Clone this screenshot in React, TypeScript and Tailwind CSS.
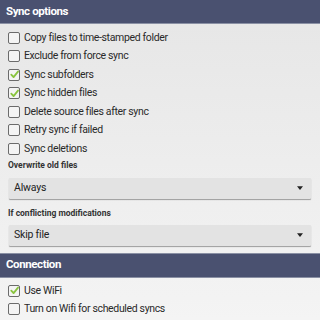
const Box = ({ checked }: { checked?: boolean }) => (
  <span className="relative flex h-[12px] w-[12px] shrink-0 items-center justify-center rounded-[2px] border border-[#6b6b6b] bg-[#f4f4f4]">
    {checked && (
      <svg viewBox="0 0 12 12" className="absolute h-[11px] w-[11px]">
        <path d="M2.5 6.2 L5 8.8 L9.8 2.8" fill="none" stroke="#8ac43f" strokeWidth="2" strokeLinecap="round" strokeLinejoin="round" />
      </svg>
    )}
  </span>
);

const Row = ({ label, checked }: { label: string; checked?: boolean }) => (
  <div className="flex h-[18.5px] items-center gap-[4px] pl-[8px]">
    <Box checked={checked} />
    <span className="text-[10.5px] tracking-[-0.35px] text-[#2a2a2a]">{label}</span>
  </div>
);

const Header = ({ title }: { title: string }) => (
  <div className="flex h-[24px] items-center border-b border-[#8a90a4] bg-[#4a5170] pl-[6px] text-[11.5px] font-bold tracking-[-0.4px] text-white">
    {title}
  </div>
);

const Select = ({ value }: { value: string }) => (
  <div className="mx-[9px] flex h-[21px] items-center justify-between rounded-[1px] bg-[#e3e3e3] pl-[5px] pr-[8px] shadow-[0_1px_1px_rgba(0,0,0,0.35)]">
    <span className="text-[10.5px] tracking-[-0.2px] text-[#222]">{value}</span>
    <svg viewBox="0 0 8 5" className="h-[4px] w-[6px]">
      <path d="M0 0 H8 L4 5 Z" fill="#222" />
    </svg>
  </div>
);

const Label = ({ text }: { text: string }) => (
  <div className="pl-[8px] text-[8.5px] font-bold text-[#333]">{text}</div>
);

export default function App() {
  return (
    <div className="h-[320px] w-[320px] overflow-hidden bg-gradient-to-b from-[#e6e6e6] to-[#f4f4f4] font-['Roboto',sans-serif]">
      <Header title="Sync options" />
      <div className="pt-[4.5px]">
        <Row label="Copy files to time-stamped folder" />
        <Row label="Exclude from force sync" />
        <Row label="Sync subfolders" checked />
        <Row label="Sync hidden files" checked />
        <Row label="Delete source files after sync" />
        <Row label="Retry sync if failed" />
        <Row label="Sync deletions" />
      </div>
      <div className="mt-[1px]"><Label text="Overwrite old files" /></div>
      <div className="mt-[6px]"><Select value="Always" /></div>
      <div className="mt-[8px]"><Label text="If conflicting modifications" /></div>
      <div className="mt-[5px]"><Select value="Skip file" /></div>
      <div className="mt-[7px] border-t border-[#8a90a4]">
        <Header title="Connection" />
      </div>
      <div className="pt-[4px]">
        <Row label="Use WiFi" checked />
        <Row label="Turn on Wifi for scheduled syncs" />
      </div>
    </div>
  );
}
